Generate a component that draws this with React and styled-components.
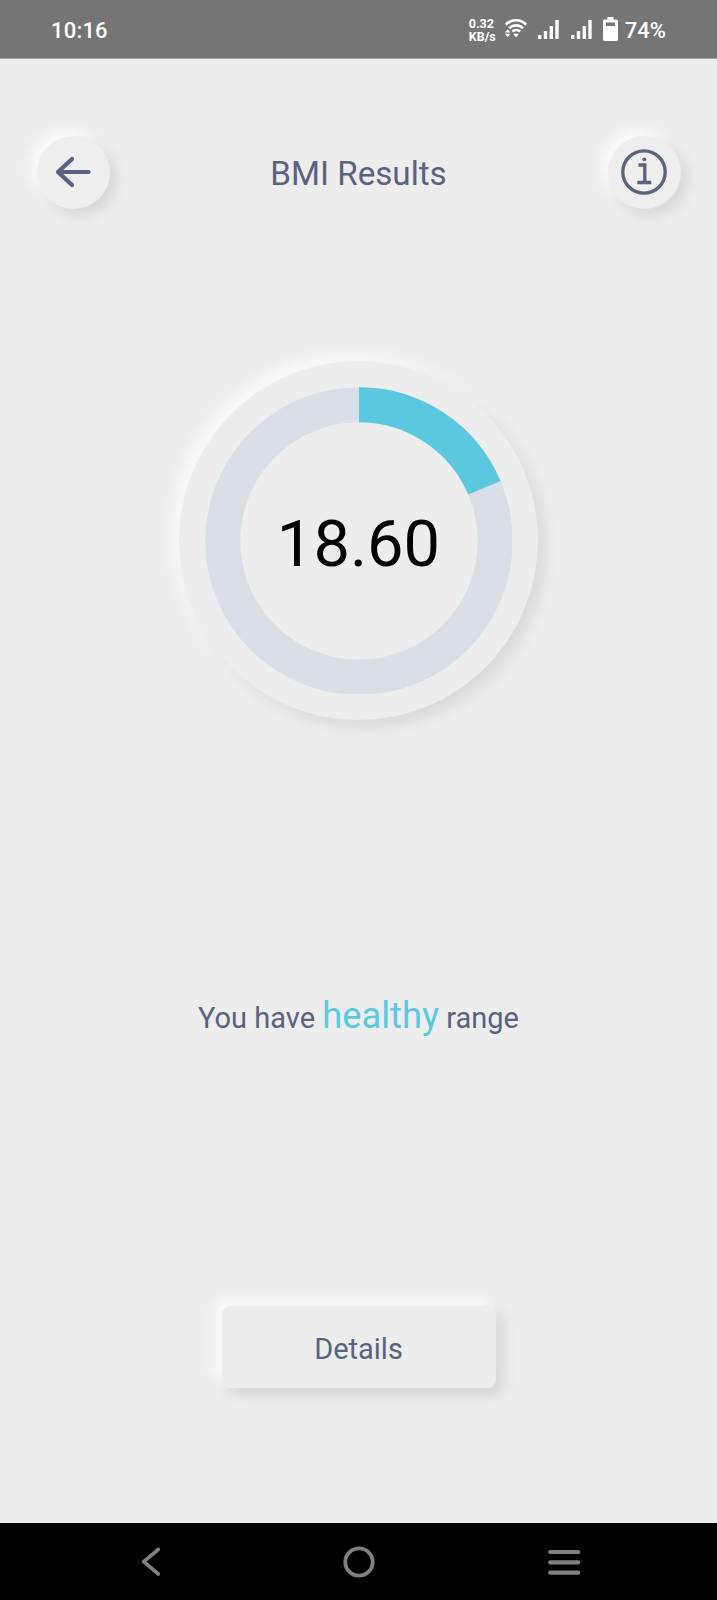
import React from "react";
import styled, { createGlobalStyle } from "styled-components";

const ink = "#59627f";
const accent = "#5ac8de";
const surface = "#ededed";

const GlobalStyle = createGlobalStyle`
  * { box-sizing: border-box; }
  body { margin: 0; background: ${surface}; font-family: Roboto, sans-serif; }
  svg { display: block; flex: none; }
`;

const Screen = styled.div`
  width: 717px;
  height: 1600px;
  display: flex;
  flex-direction: column;
  background: ${surface};
  color: ${ink};
  overflow: hidden;
`;

const StatusBar = styled.header`
  flex: none;
  height: 59px;
  padding: 0 51px 0 51px;
  display: flex;
  align-items: center;
  justify-content: space-between;
  background: #757575;
  border-bottom: 1px solid #a5a5a5;
  color: #fff;
`;

const StatusText = styled.span`
  margin-top: 3px;
  font-size: 22px;
  line-height: 26px;
  font-weight: 500;
  letter-spacing: ${(p) => p.$spacing || "0"};
`;

const StatusGroup = styled.div`
  display: flex;
  align-items: center;
`;

const NetSpeed = styled.div`
  width: 36px;
  padding-top: 1px;
  font-size: 12.5px;
  line-height: 13px;
  font-weight: 700;
  white-space: nowrap;
`;

const WifiSlot = styled.div`margin: 0 11px 2px 0;`;
const SignalSlot = styled.div`margin-right: ${(p) => p.$gap}px;`;
const BatterySlot = styled.div`margin-right: 7px;`;

const TopBar = styled.div`
  flex: none;
  display: flex;
  align-items: center;
  justify-content: space-between;
  margin-top: 77px;
  padding: 0 36px 0 37px;
`;

const RoundButton = styled.button`
  width: 73px;
  height: 73px;
  padding: 0 1px 2px 0;
  border: 0;
  border-radius: 50%;
  display: flex;
  align-items: center;
  justify-content: center;
  background: #eeeeef;
  color: ${ink};
  box-shadow: 6px 6px 14px rgba(0, 0, 0, 0.1), -6px -6px 14px rgba(255, 255, 255, 0.9);
`;

const Title = styled.h1`
  margin: 3px 1px 0 0;
  font-size: 33.2px;
  line-height: 40px;
  font-weight: 400;
`;

const Dial = styled.section`
  flex: none;
  align-self: center;
  width: 359px;
  height: 359px;
  margin-top: 152px;
  border-radius: 50%;
  display: grid;
  place-items: center;
  background: ${surface};
  box-shadow: 7px 7px 15px rgba(0, 0, 0, 0.09), -7px -7px 15px rgba(255, 255, 255, 0.75);
  > * { grid-area: 1 / 1; }
`;

const Score = styled.output`
  margin-top: 7px;
  font-size: 65px;
  line-height: 76px;
  color: #000;
`;

const Message = styled.p`
  flex: none;
  margin: 272px 0 0;
  text-align: center;
  font-size: 29px;
  line-height: 48px;
`;

const Highlight = styled.span`
  font-size: 36.3px;
  color: ${accent};
`;

const DetailsButton = styled.button`
  flex: none;
  align-self: center;
  width: 274px;
  height: 82px;
  margin-top: 264px;
  padding: 3px 0 0;
  border: 0;
  border-radius: 8px;
  background: ${surface};
  color: ${ink};
  font: 400 29px/34px Roboto, sans-serif;
  box-shadow: 7px 7px 14px rgba(0, 0, 0, 0.1), -7px -7px 14px rgba(255, 255, 255, 0.85);
`;

const NavBar = styled.nav`
  flex: none;
  height: 77px;
  margin-top: auto;
  padding: 0 136px 0 140px;
  display: flex;
  align-items: center;
  justify-content: space-between;
  background: #000;
  color: #808080;
`;

const Wifi = () => (
  <svg width="22" height="19" viewBox="0 0 22 19" fill="none" stroke="#fff" strokeWidth="2.7">
    <path d="M.8 5.600C6.600-.2 15.600-.2 21.200 5.600M4.200 9.200c4-3.700 10-3.700 13.800 0M7.400 12.600c2.200-1.900 5.500-1.900 7.700 0" />
    <path d="M0 13.500 2.700 10.300 5.400 13.500zM0 14.800h5.400L2.700 18.200zM8.200 14.800h5.700L11 18.400z" fill="#fff" stroke="none" />
  </svg>
);

const Signal = () => (
  <svg width="21" height="19" viewBox="0 0 21 19" fill="#fff">
    <rect y="15" width="3.4" height="4" rx=".6" />
    <rect x="5.8" y="11" width="3.4" height="8" rx=".6" />
    <rect x="11.6" y="6" width="3.4" height="13" rx=".6" />
    <rect x="17.3" y="0" width="3.4" height="19" rx=".6" />
  </svg>
);

const Battery = () => (
  <svg width="15" height="24" viewBox="0 0 15 24">
    <path fill="#fff" fillRule="evenodd" d="M4.500 0h6v2.400h2.800Q15 2.400 15 4.100v18.200q0 1.700-1.700 1.700H1.700Q0 24 0 22.300V4.100Q0 2.400 1.700 2.400h2.800zM3 5.500v3.500h9V5.500z" />
  </svg>
);

const BackArrow = () => (
  <svg width="36" height="32" viewBox="0 0 36 32" fill="none" stroke="currentColor" strokeWidth="4.200" strokeLinecap="round" strokeLinejoin="round">
    <path d="M33.500 16H3M17 3 3 16l14 13" />
  </svg>
);

const Info = () => (
  <svg width="46" height="46" viewBox="0 0 46 46" fill="none" stroke="currentColor" strokeWidth="3.300">
    <circle cx="23" cy="23" r="21.200" />
    <path d="M17.500 16h6.300v17M16.300 33.500h14" />
    <circle cx="23.300" cy="10.300" r="1.900" fill="currentColor" stroke="none" />
  </svg>
);

const Gauge = ({ value }) => {
  const radius = 136.2;
  const length = 2 * Math.PI * radius;
  return (
    <svg width="307" height="307" viewBox="0 0 307 307" fill="none" strokeWidth="35">
      <circle cx="154" cy="154" r={radius} stroke="#d9dfe6" />
      <circle
        cx="154"
        cy="154"
        r={radius}
        stroke={accent}
        strokeDasharray={`${(length * value) / 100} ${length}`}
        transform="rotate(-90 154 154)"
      />
    </svg>
  );
};

const NavBack = () => (
  <svg width="30" height="32" viewBox="0 0 30 32" fill="none" stroke="currentColor" strokeWidth="3.700" strokeLinecap="round" strokeLinejoin="round">
    <path d="M18.300 3.500 3.700 15.700 18.300 28" />
  </svg>
);

const NavHome = () => (
  <svg width="32" height="32" viewBox="0 0 32 32" fill="none" stroke="currentColor" strokeWidth="3.800">
    <circle cx="16" cy="16" r="13.700" />
  </svg>
);

const NavMenu = () => (
  <svg width="34" height="26" viewBox="0 0 34 26" fill="none" stroke="currentColor" strokeWidth="4.200" strokeLinecap="round">
    <path d="M3.200 3h28M3.200 13.300h28M3.200 23.700h28" />
  </svg>
);

export default function App() {
  return (
    <>
      <GlobalStyle />
      <Screen>
        <StatusBar>
          <StatusText $spacing="0.2px">10:16</StatusText>
          <StatusGroup>
            <NetSpeed>
              <div>0.32</div>
              <div>KB/s</div>
            </NetSpeed>
            <WifiSlot><Wifi /></WifiSlot>
            <SignalSlot $gap={12}><Signal /></SignalSlot>
            <SignalSlot $gap={11}><Signal /></SignalSlot>
            <BatterySlot><Battery /></BatterySlot>
            <StatusText>74%</StatusText>
          </StatusGroup>
        </StatusBar>
        <TopBar>
          <RoundButton aria-label="Back"><BackArrow /></RoundButton>
          <Title>BMI Results</Title>
          <RoundButton aria-label="Information"><Info /></RoundButton>
        </TopBar>
        <Dial>
          <Gauge value={18.6} />
          <Score>18.60</Score>
        </Dial>
        <Message>
          You have <Highlight>healthy</Highlight> range
        </Message>
        <DetailsButton>Details</DetailsButton>
        <NavBar>
          <NavBack />
          <NavHome />
          <NavMenu />
        </NavBar>
      </Screen>
    </>
  );
}
